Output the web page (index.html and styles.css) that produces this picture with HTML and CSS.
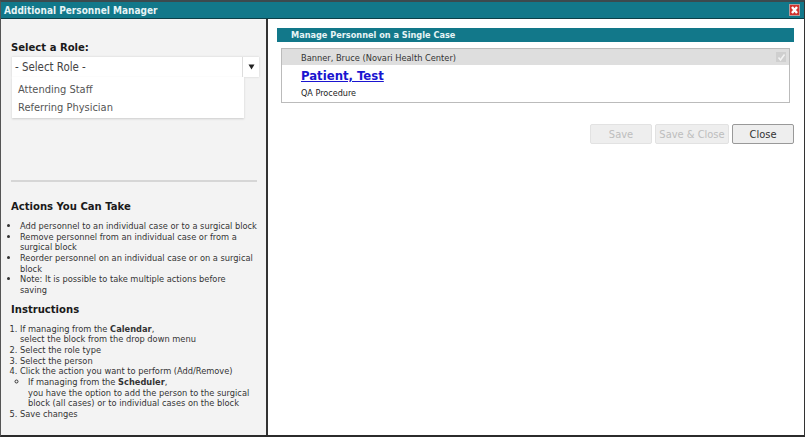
FILE: index.html
```html
<!DOCTYPE html>
<html lang="en">
<head>
<meta charset="utf-8">
<title>Additional Personnel Manager</title>
<link rel="stylesheet" href="styles.css">
</head>
<body>
<div class="dialog">
  <header class="titlebar">
    <span class="title">Additional Personnel Manager</span>
    <span class="close-x">
      <svg width="11" height="12" viewBox="0 0 11 12"><rect x="0.5" y="0.5" width="10" height="11" fill="#d2322d" stroke="#b89a9a"/><path d="M3 3l5 6M8 3l-5 6" stroke="#fff" stroke-width="2.4"/></svg>
    </span>
  </header>
  <div class="panes">
    <aside class="side">
      <div class="role-block">
        <h2 class="role-label">Select a Role:</h2>
        <div class="select">
          <span class="select-value">- Select Role -</span>
          <span class="select-arrow"><svg width="7" height="6" viewBox="0 0 7 6"><path d="M0.5 0.5h6l-3 5z" fill="#222"/></svg></span>
        </div>
        <ul class="options">
          <li>Attending Staff</li>
          <li>Referring Physician</li>
        </ul>
      </div>
      <hr class="rule">
      <h3 class="heading">Actions You Can Take</h3>
      <ul class="list">
        <li>Add personnel to an individual case or to a surgical block</li>
        <li>Remove personnel from an individual case or from a surgical block</li>
        <li>Reorder personnel on an individual case or on a surgical block</li>
        <li>Note: It is possible to take multiple actions before<br>saving</li>
      </ul>
      <h3 class="heading heading-instr">Instructions</h3>
      <ol class="list">
        <li>If managing from the <b>Calendar</b>,<br>select the block from the drop down menu</li>
        <li>Select the role type</li>
        <li>Select the person</li>
        <li>Click the action you want to perform (Add/Remove)
          <ul class="sublist"><li>If managing from the <b>Scheduler</b>,<br>you have the option to add the person to the surgical block (all cases) or to individual cases on the block</li></ul>
        </li>
        <li>Save changes</li>
      </ol>
    </aside>
    <main class="content">
      <div class="section-bar">Manage Personnel on a Single Case</div>
      <div class="case">
        <div class="case-head">
          <span>Banner, Bruce (Novari Health Center)</span>
          <span class="check"><svg width="9" height="9" viewBox="0 0 9 9"><path d="M1.5 4.5l2 2.5 4-5.5" fill="none" stroke="#f2f2f2" stroke-width="1.6"/></svg></span>
        </div>
        <div class="case-body">
          <a class="patient" href="#">Patient, Test</a>
          <div class="procedure">QA Procedure</div>
        </div>
      </div>
      <div class="actions">
        <button class="btn btn-off btn-save" type="button">Save</button>
        <button class="btn btn-off btn-saveclose" type="button">Save &amp; Close</button>
        <button class="btn btn-close" type="button">Close</button>
      </div>
    </main>
  </div>
</div>
</body>
</html>
```
FILE: styles.css
```css
* { box-sizing: border-box; }
html, body { margin: 0; padding: 0; }
body { width: 805px; height: 437px; overflow: hidden; background: #fff; font-family: "DejaVu Sans Condensed", "DejaVu Sans", Verdana, sans-serif; font-stretch: condensed; font-size: 9px; color: #222; }
.dialog { width: 805px; height: 437px; display: flex; flex-direction: column; border-top: 2px solid #3c4a4e; border-bottom: 2px solid #2b2b2b; border-left: 1px solid #555; border-right: 1px solid #333; }
.titlebar { height: 17px; flex: none; background: #12788a; border-bottom: 1px solid #0c3f48; display: flex; align-items: center; justify-content: space-between; padding: 0 4px 0 3px; color: #e6f4f6; }
.title { font-weight: bold; font-size: 10px; }
.close-x { display: flex; }
.panes { flex: 1; display: flex; min-height: 0; }
.side { width: 267px; flex: none; background: #f3f3f3; border-right: 2px solid #333; padding: 22px 7px 0 10px; }
.role-block { height: 139px; }
.role-label { margin: 0 0 3px; font-size: 11.2px; font-weight: bold; color: #1a1a1a; line-height: 13px; }
.select { height: 20px; width: 247px; margin-left: 1px; background: #fff; display: flex; font-size: 11.4px; color: #444; box-shadow: 0 0 2px #ccc; }
.select-value { flex: 1; padding: 3px 3px; line-height: 14px; border-right: 1px solid #ddd; }
.select-arrow { width: 16px; display: flex; align-items: center; justify-content: center; }
.options { list-style: none; margin: 0 0 0 1px; padding: 4px 6px; width: 232px; height: 41px; background: #fff; box-shadow: 0 1px 2px #ccc; font-size: 11px; color: #555; line-height: 18px; }
.rule { margin: 0 2px 0 0; border: 0; border-top: 2px solid #d6d6d6; }
.heading { margin: 18px 0 0; font-size: 11.2px; font-weight: bold; color: #1a1a1a; line-height: 14px; }
.heading-instr { margin-top: 7px; }
.list { margin: 7px 0 0; padding: 0 0 0 9px; line-height: 10.67px; color: #333; font-size: 9.2px; }
ul.list { list-style: disc; }
ol.list { margin-top: 7px; }
.sublist { margin: 0; padding-left: 8px; list-style: circle; }
.content { flex: 1; padding: 9px 10px 0 9px; background: #fff; }
.section-bar { height: 14px; background: #12788a; color: #e6f4f6; font-weight: bold; font-size: 9.1px; line-height: 15px; padding-left: 14px; }
.case { margin: 6px 4px 0 4px; border: 1px solid #bbb; height: 55px; }
.case-head { height: 16px; background: #dedede; display: flex; align-items: center; justify-content: space-between; padding: 0 3px 0 19px; color: #333; font-size: 9.2px; }
.check { width: 10px; height: 10px; background: #cfcfcf; display: flex; align-items: center; justify-content: center; }
.case-body { padding: 3px 0 0 19px; }
.patient { display: block; color: #1a14d0; font-size: 13px; font-weight: bold; line-height: 16px; }
.procedure { margin-top: 4px; font-size: 9px; color: #222; }
.actions { margin-top: 21px; display: flex; justify-content: flex-end; gap: 3px; }
.btn { height: 20px; font-family: inherit; font-stretch: inherit; font-size: 11px; padding: 0; border-radius: 2px; background: #eee; }
.btn-off { color: #bdbdbd; border: 1px solid #e2e2e2; }
.btn-save { width: 62px; }
.btn-saveclose { width: 74px; }
.btn-close { width: 62px; color: #333; border: 1px solid #999; }
```
